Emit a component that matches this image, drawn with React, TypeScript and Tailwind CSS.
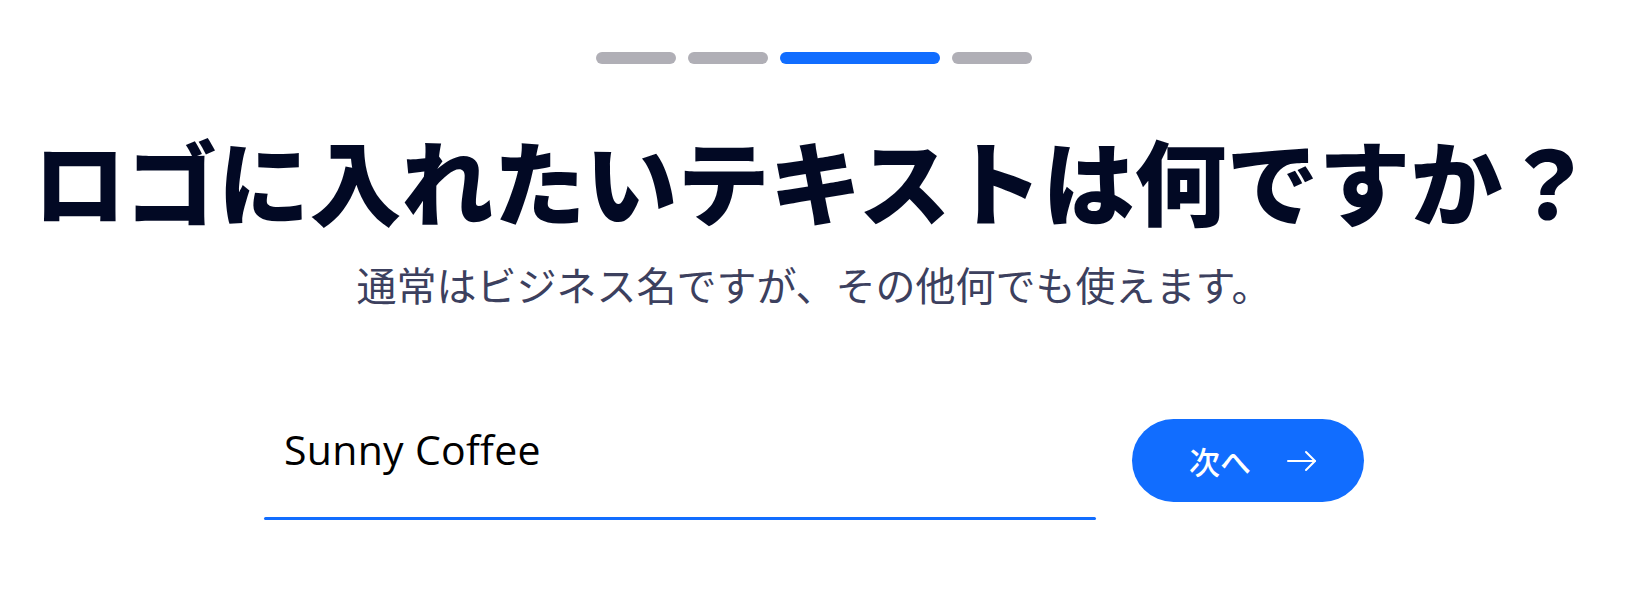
import { useState } from 'react';

const steps = [
  { id: 1, active: false, wide: false },
  { id: 2, active: false, wide: false },
  { id: 3, active: true, wide: true },
  { id: 4, active: false, wide: false },
];

function ArrowRight() {
  return (
    <svg width="30" height="22" viewBox="0 0 30 22" fill="none" stroke="white" strokeWidth="2" strokeLinecap="round" strokeLinejoin="round">
      <path d="M1 11H28" />
      <path d="M19 2L28 11L19 20" />
    </svg>
  );
}

export default function App() {
  const [logoText, setLogoText] = useState('Sunny Coffee');

  return (
    <div className="min-h-screen bg-white">
      <div className="w-[1628px] flex flex-col items-center pt-[52px]" style={{ fontFamily: '"Noto Sans CJK JP", "Noto Sans", sans-serif' }}>
        {/* ステップ表示 */}
        <div className="flex items-center gap-[12px]">
          {steps.map((s) => (
            <div
              key={s.id}
              className={`h-[12px] rounded-full ${s.wide ? 'w-[160px]' : 'w-[80px]'} ${s.active ? 'bg-[#116dff]' : 'bg-[#b0afb6]'}`}
            />
          ))}
        </div>

        {/* 見出し */}
        <h1 className="mt-[61px] text-[92px] leading-[108px] font-black text-[#020924] whitespace-nowrap">
          ロゴに入れたいテキストは何ですか？
        </h1>
        <p className="mt-[23px] text-[40px] leading-[56px] text-[#3c405e] whitespace-nowrap">
          通常はビジネス名ですが、その他何でも使えます。
        </p>

        {/* 入力欄 */}
        <div className="mt-[107px] flex items-start gap-[36px]">
          <div className="w-[832px] flex flex-col pt-[3px]">
            <input
              value={logoText}
              onChange={(e) => setLogoText(e.target.value)}
              className="h-[56px] pl-[20px] text-[41px] tracking-[0.3px] text-black bg-transparent outline-none"
              style={{ fontFamily: '"Open Sans", "Noto Sans CJK JP", sans-serif' }}
            />
            <div className="mt-[39px] h-[3px] rounded-full bg-[#116dff]" />
          </div>
          <button className="w-[232px] h-[83px] rounded-full bg-[#116dff] flex items-center justify-center gap-[36px] pl-[10px]">
            <span className="text-[31px] leading-none font-medium text-white">次へ</span>
            <ArrowRight />
          </button>
        </div>
      </div>
    </div>
  );
}
